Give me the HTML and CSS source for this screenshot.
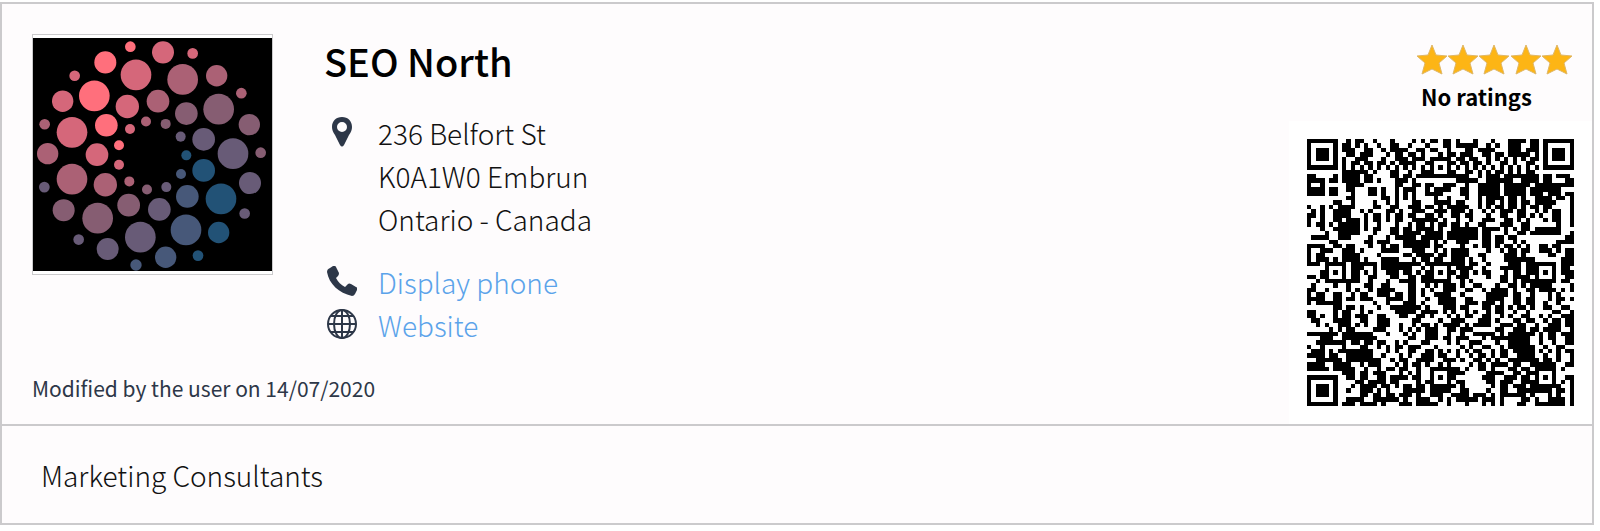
FILE: index.html
```
<!DOCTYPE html>
<html lang="en">
<head>
    <meta charset="UTF-8">
    <meta name="viewport" content="width=device-width, initial-scale=1.0">
    <title>SEO North</title>
    <link rel="stylesheet" href="styles.css">
</head>
<body>
    <main class="card">
        <section class="card-top">
            <div class="company">
                <div class="profile">
                    <div class="logo">
                        <svg id="logo" viewBox="38 39 717 697" preserveAspectRatio="none" role="img" aria-label="SEO North logo"></svg>
                    </div>
                    <div class="details">
                        <h1>SEO North</h1>
                        <div class="row address-row">
                            <svg class="icon" viewBox="0 0 30 30" aria-hidden="true">
                                <path fill-rule="evenodd" d="M15 0C9 0 5 4 5 10c0 3 1 5 3 8l5 10q2 3 4 0l5-10c2-3 3-5 3-8 0-6-4-10-10-10zm0 5a5 5 0 1 1 0 10 5 5 0 0 1 0-10z"/>
                            </svg>
                            <address>236 Belfort St<br>K0A1W0 Embrun<br>Ontario - Canada</address>
                        </div>
                        <div class="row">
                            <svg class="icon" viewBox="0 0 30 30" aria-hidden="true">
                                <path d="M3 2l3-2q2-1 3 1l3 6q0 2-1 3l-2 2c2 4 5 7 9 9l3-3q1-1 3 0l5 3q2 1 1 3l-2 4q-1 2-3 2C12 27 2 18 0 6q0-3 3-4z"/>
                            </svg>
                            <a href="#phone">Display phone</a>
                        </div>
                        <div class="row">
                            <svg class="icon icon-line" viewBox="0 0 30 30" aria-hidden="true">
                                <circle cx="15" cy="15" r="14"/>
                                <ellipse cx="15" cy="15" rx="8" ry="14"/>
                                <path d="M15 1v28M1 15h28M4 7h22M4 23h22"/>
                            </svg>
                            <a href="#website">Website</a>
                        </div>
                    </div>
                </div>
                <p class="modified">Modified by the user on 14/07/2020</p>
            </div>
            <aside class="side">
                <div class="rating">
                    <svg class="stars" viewBox="0 0 157 31" role="img" aria-label="5 stars">
                        <defs>
                            <path id="star" d="M16 1l4 10 11 1-8 7 3 11-10-5-10 5 3-11-8-7 11-1z"/>
                        </defs>
                        <use href="#star"/>
                        <use href="#star" x="31"/>
                        <use href="#star" x="62"/>
                        <use href="#star" x="94"/>
                        <use href="#star" x="125"/>
                    </svg>
                    <p>No ratings</p>
                </div>
                <div class="qr">
                    <svg id="qr" viewBox="0 0 61 61" role="img" aria-label="QR code"></svg>
                </div>
            </aside>
        </section>
        <section class="category">Marketing Consultants</section>
    </main>
    <script src="script.js"></script>
</body>
</html>
```
FILE: styles.css
```
:root {
    --line: #cbcacc;
    --card-bg: #fefcfd;
    --icon: #2d3748;
    --link: #5ba3ea;
}

* {
    box-sizing: border-box;
}

body {
    margin: 0;
    background: #fff;
    color: #111;
    font-family: "Noto Sans CJK SC", "Open Sans", sans-serif;
    font-size: 28px;
    font-weight: 300;
    line-height: 43px;
}

h1, p {
    margin: 0;
}

.card {
    margin: 2px 6px 0 0;
    background: var(--card-bg);
    border: 2px solid var(--line);
}

.card-top {
    display: flex;
    justify-content: space-between;
    border-bottom: 2px solid var(--line);
}

.company {
    padding: 30px 0 0 30px;
}

.profile {
    display: flex;
    align-items: flex-start;
    gap: 51px;
}

.logo {
    width: 241px;
    height: 241px;
    padding: 3px 0;
    background: #fff;
    border: 1px solid var(--line);
}

.logo svg {
    display: block;
    width: 100%;
    height: 100%;
    background: #000;
}

h1 {
    margin-bottom: 24px;
    color: #000;
    font-size: 38px;
    font-weight: 500;
    line-height: 54px;
}

.row {
    display: flex;
    align-items: flex-start;
    gap: 21px;
}

.address-row {
    margin-bottom: 20px;
}

address {
    font-style: normal;
}

.icon {
    width: 30px;
    height: 30px;
    margin: 5px 0 0 3px;
    fill: var(--icon);
}

.icon-line {
    fill: none;
    stroke: var(--icon);
    stroke-width: 2;
}

a {
    color: var(--link);
    text-decoration: none;
}

a:hover {
    text-decoration: underline;
}

.modified {
    margin-top: 26px;
    color: var(--icon);
    font-size: 21px;
    font-weight: 400;
    line-height: 30px;
}

.side {
    display: flex;
    flex-direction: column;
    align-items: flex-end;
    padding-top: 40px;
}

.rating {
    padding-right: 19px;
    color: #000;
    font-size: 22px;
    font-weight: 700;
    line-height: 30px;
}

.rating p {
    padding: 6px 0 0 5px;
}

.stars {
    display: block;
    width: 157px;
    height: 31px;
    fill: #fdb515;
    stroke: #dfb768;
    stroke-width: 1;
}

.qr {
    margin-top: 10px;
    padding: 18px;
    background: #fff;
}

.qr svg {
    display: block;
    width: 267px;
    height: 267px;
}

.category {
    padding: 28px 39px 26px;
}
```
FILE: script.js
```
const SVG_NS = 'http://www.w3.org/2000/svg';

// x, y, radius, color
const dots = [
    [330, 65, 16, '#ff6f7c'], [428, 82, 33, '#d5677a'], [517, 85, 16, '#d5677a'],
    [255, 112, 33, '#ff6f7c'], [347, 149, 46, '#d5677a'], [487, 163, 46, '#ab6175'],
    [589, 152, 32, '#ab6175'], [163, 152, 16, '#d5677a'], [663, 204, 16, '#ab6175'],
    [222, 212, 46, '#ff6f7c'], [127, 228, 32, '#d5677a'], [321, 244, 35, '#d5677a'],
    [413, 228, 34, '#ab6175'], [498, 265, 34, '#865d72'], [595, 252, 46, '#865d72'],
    [687, 298, 32, '#865d72'], [73, 297, 16, '#ab6175'], [155, 321, 46, '#d5677a'],
    [258, 300, 34, '#ff6f7c'], [329, 311, 15, '#d5677a'], [377, 289, 15, '#ab6175'],
    [436, 296, 15, '#865d72'], [481, 334, 15, '#685b77'], [550, 342, 34, '#685b77'],
    [638, 385, 46, '#685b77'], [721, 382, 16, '#865d72'], [82, 385, 32, '#ab6175'],
    [230, 388, 34, '#d5677a'], [296, 360, 15, '#ff6f7c'], [296, 418, 15, '#d5677a'],
    [498, 390, 15, '#225276'], [550, 435, 34, '#225276'], [482, 446, 15, '#475879'],
    [155, 461, 46, '#ab6175'], [255, 478, 35, '#ab6175'], [327, 468, 15, '#ab6175'],
    [380, 492, 15, '#865d72'], [438, 485, 15, '#685b77'], [689, 473, 33, '#685b77'],
    [72, 485, 16, '#685b77'], [602, 520, 46, '#225276'], [501, 513, 34, '#475879'],
    [130, 554, 33, '#865d72'], [325, 539, 34, '#865d72'], [417, 552, 34, '#685b77'],
    [232, 578, 46, '#865d72'], [673, 564, 16, '#685b77'], [360, 635, 46, '#685b77'],
    [497, 613, 46, '#475879'], [595, 621, 32, '#225276'], [175, 642, 16, '#685b77'],
    [262, 670, 33, '#685b77'], [436, 695, 32, '#475879'], [533, 690, 16, '#225276'],
    [347, 718, 17, '#475879']
];

const logo = document.getElementById('logo');
for (const [x, y, r, color] of dots) {
    const dot = document.createElementNS(SVG_NS, 'circle');
    dot.setAttribute('cx', x);
    dot.setAttribute('cy', y);
    dot.setAttribute('r', r);
    dot.setAttribute('fill', color);
    logo.appendChild(dot);
}

// QR modules, one string per row
const modules = [
    '#######..#.##..#...#....#.#.##.##.#...#...#...####.##.#######',
    '#.....#.##.#.#..#..##..#...#...##.#####..#.#..###..##.#.....#',
    '#.###.#.###..##..#.####..##.##..#...##.####...###.###.#.###.#',
    '#.###.#..##.###...#.##.##.#...#.##.###..##.##.#####.#.#.###.#',
    '#.###.#.#..###...#..###.###.##.#..##.##..#.#.#.#.#.##.#.###.#',
    '#.....#.#.##.##.##.#.####..#####.#.##.##.#..##.#..##..#.....#',
    '#######.#.#.#.#.#.#.#.#.#.#.#.#.#.#.#.#.#.#.#.#.#.#.#.#######',
    '........######.#...##..#..###...##..##.#.#.##.#.#.##.........',
    '##....#.####.##....##.##.####.#######..#.###.########.##.###.',
    '####.##.####.##.#...###.#.........#####..######..####.##...##',
    '#..#.....####.......##..##.##..###..#..#####.######.#########',
    '####.##..##...##.#..#.###..#.####..##..#####.#####.#######...',
    '####.##...#...##.#..#.#.#..####....##..#####.#####.###.###.##',
    '.........##......##.#.#.#....#..#...#..#.####.##.#..####.##.#',
    '......##..#....#..#.#...##...####.##...#.##.#.##.##.#####...#',
    '#..#.#.####....##..##..###.##.#.#####..#.#.##.##.#.##.##....#',
    '.#.#..####..#.#...##.#..###..###.###.#..#.#.###.##..#.#.##..#',
    '##.#..####...#.##.#.##.##..##.#..##.##...#..##..##.#.#..##..#',
    '#..#..##.###.#.##.#.##..######.#..#..#..###..##.#.#...#.##..#',
    '#.##.#.#####.#..#...#..#.##.#.##.##.#..##...###..##......#..#',
    '...#..######.#.##..##.##.####.#..######.####.#.#.##.######...',
    '....#..#####...#...##.####.####.#######.##...#..##.#######..#',
    '.####..###....#...#.#####.#####.#######.##.##.##...........##',
    '.....##......##.###...######.#.#..###...##.##..#.#.......####',
    '####..##.##...#..#.##.######.##....#..#.##.#.##.#.#..##.##...',
    '#..###..###.#....####...###..#.#.####....#..#.##.##..###.#.##',
    '#.##....####....#.....##.####.##.####..##....###.#.....##..##',
    '#.###.#.####.#...####...#.##.##..###.#..#....#######......###',
    '###..####.######.#########.#####.###.##..#....###.#####.#.###',
    '....#.....###..#.#######..#.#...#.####..#...#####.##.#....##.',
    '...#.##.#.##.#.#..###.##.#.###.#.#.##.#.##...#.##.###.#.#.###',
    '##.##.....##..##...##..##.##....#.###....#..##.####.#......##',
    '..#.########..#...#..####.#######..#.#......##.#.########.##.',
    '.#....#..#...##..##....##..#.#.###.#..##...#..##.#.#####....#',
    '##..#....#.#..#.####...##.#.#..###..##..#.####.#..##.####.#.#',
    '#.##..##..#.##..###.##.##.#..####..#.....#####.##..#...#.#...',
    '####..##.##.###...####.##..#..####..##...####..##.##...#.##.#',
    '#.######.......#..#...###.#...####..###.###.#..##.##..#..#...',
    '......##.##.#...#..#######.#...###.##...##.##.#.##.#..##..##.',
    '##....#.##..#.#.....#####.####.#.#..#.#..#.##..#..#.....##..#',
    '##.#..#.##.###..##...##..##.#...#.#.##..##..#.#..##..#.#..###',
    '.##...####..##..###.....##....#..###...###.#...##.##..#.##.##',
    '..#.#..###.#.#..###..#..#.##.#.####.#.####..###.##..#..###.##',
    '.....#.#.##....###...#.#.#.###..##.###.....##..###.##.####..#',
    '#######.#######...#...#.#..###..#..#..#####.#.######.#.##.###',
    '...###..########.......##..###.##.###...#.#########..#.##..##',
    '..#######.##.##.##..#.#...##....#.#..###...#..#####..#..#..##',
    '#..#....#...##..#.#.##.###...#.....#.#..##..#.######..#..##..',
    '.###.#.########...#.#..##..##.#.#.#.#.##..#.##.#####.#.#.#.##',
    '####.##..######..#...#.#..###.##..#..#.##.#.##..####..#..#..#',
    '..######.########..#.##..####..###.#..##.#.#..#######.##.#..#',
    '####..####..#.###...#.#.##.#..#.#....#.##.####.##..######..##',
    '#####.#####..#..#.##.##..#...##..##.#..##.#...##.##.#####.#..',
    '........###.##.###...#.#.#..####.###.....####..##.#######....',
    '#######..##.##..##.####.##..#...##......###..###.##.#...#..##',
    '#.....#....##.####.##....#.##.#.#.##.....##.###..###..#.#.#.#',
    '#.###.#...#.####.##.#.##.##.#...##.#......#.##.###.##...##..#',
    '#.###.#..#..###.#.#...#####.#####..##....#..##..########.##.#',
    '#.###.#.....##.##.##.###.#..###..####.###.#.######.#...#.#..#',
    '#.....#..####..######.#..###..#.#.#####.###.#....##.#..####.#',
    '#######.###.####.#...###.#####..#...#...#.#.#...##..#######.#'
].map(row => [...row].map(cell => cell === '#'));

// Alignment squares: 5x5 ring with a single dark module in the middle
for (const [cx, cy] of [[30, 6], [6, 30], [30, 30], [54, 30], [30, 54], [54, 54]]) {
    for (let dy = -2; dy <= 2; dy++) {
        for (let dx = -2; dx <= 2; dx++) {
            modules[cy + dy][cx + dx] = Math.max(Math.abs(dx), Math.abs(dy)) !== 1;
        }
    }
}

let path = '';
modules.forEach((row, y) => {
    row.slice(0, 61).forEach((dark, x) => {
        if (dark) path += `M${x} ${y}h1v1h-1z`;
    });
});
const code = document.createElementNS(SVG_NS, 'path');
code.setAttribute('d', path);
code.setAttribute('shape-rendering', 'crispEdges');
document.getElementById('qr').appendChild(code);
```
